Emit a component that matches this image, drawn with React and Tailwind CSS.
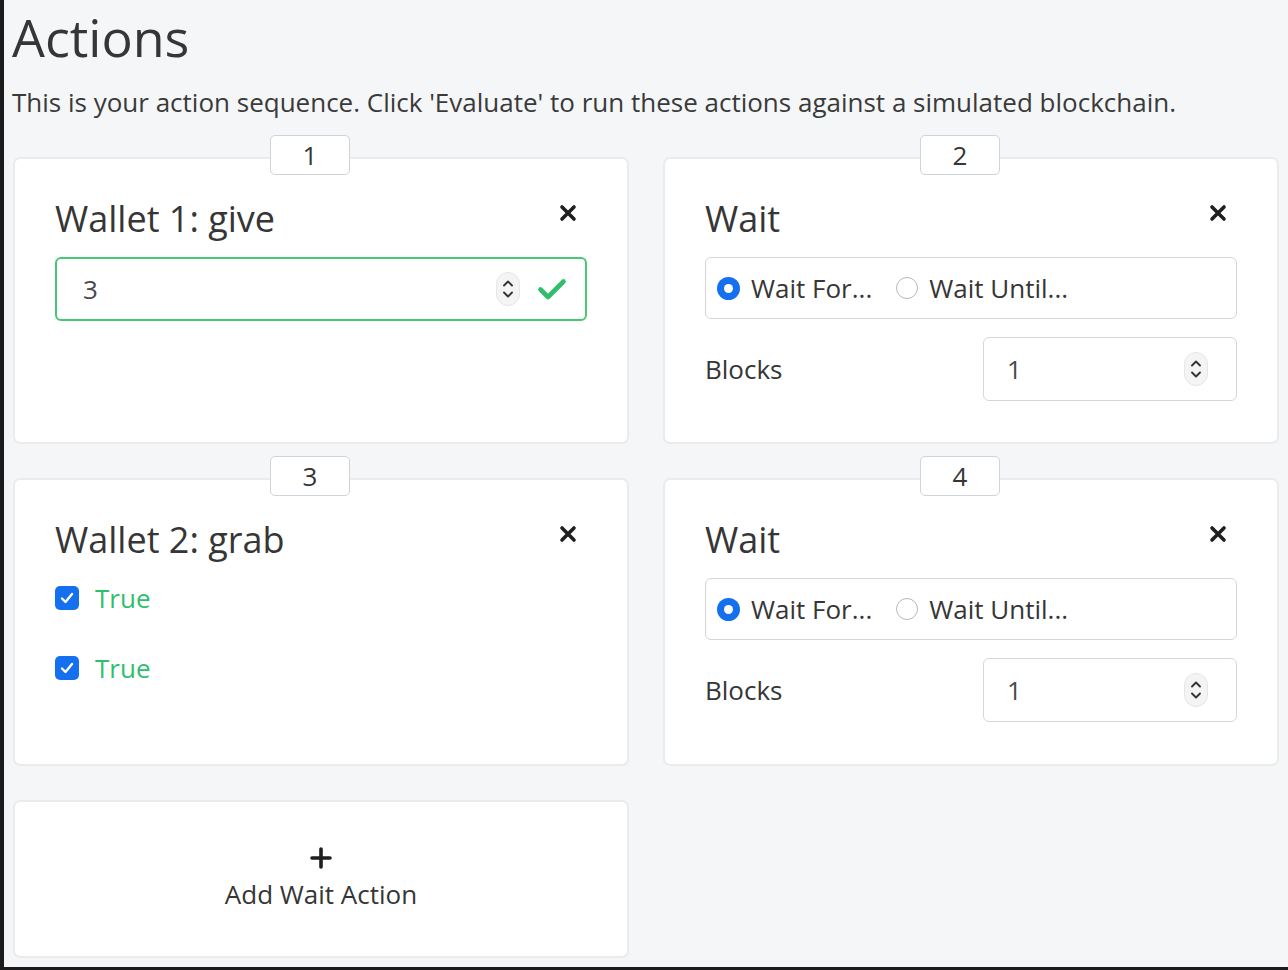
import React from 'react'

const FONT = { fontFamily: '"Open Sans", "Liberation Sans", sans-serif' }

function CloseIcon() {
  return (
    <svg width="20" height="20" viewBox="0 0 20 20" className="block">
      <path d="M4 4 L16 16 M16 4 L4 16" stroke="#1f1f1f" strokeWidth="3.6" strokeLinecap="round" />
    </svg>
  )
}

function Spinner() {
  return (
    <div className="w-[24px] h-[34px] shrink-0 rounded-full bg-[#f4f4f4] border border-[#e6e6e6] flex flex-col items-center justify-center gap-[4px]">
      <svg width="12" height="8" viewBox="0 0 12 8">
        <path d="M2 6.5 L6 2.5 L10 6.5" fill="none" stroke="#333" strokeWidth="1.9" strokeLinecap="round" strokeLinejoin="round" />
      </svg>
      <svg width="12" height="8" viewBox="0 0 12 8">
        <path d="M2 1.5 L6 5.5 L10 1.5" fill="none" stroke="#333" strokeWidth="1.9" strokeLinecap="round" strokeLinejoin="round" />
      </svg>
    </div>
  )
}

function Badge({ n }) {
  return (
    <div className="absolute top-0 left-[257px] w-[80px] h-[40px] rounded-[5px] border border-[#cfd4da] bg-white flex items-center justify-center text-[26px] text-[#363636] leading-none">
      {n}
    </div>
  )
}

function Card({ children, className = '' }) {
  return (
    <div className={`rounded-[7px] border-2 border-[#eaebec] bg-white ${className}`}>
      {children}
    </div>
  )
}

function Header({ title }) {
  return (
    <div className="flex items-start justify-between">
      <h3 className="text-[36px] leading-[1.2] text-[#363636]">{title}</h3>
      <div className="mt-[6px] mr-[9px]">
        <CloseIcon />
      </div>
    </div>
  )
}

function NumberBox({ value, className = '', valid }) {
  return (
    <div
      className={`h-[64px] rounded-[6px] bg-white flex items-center ${
        valid ? 'border-2 border-[#48c774] pl-[26px] pr-[18px]' : 'border border-[#d3d6da] pl-[23px] pr-[28px]'
      } ${className}`}
    >
      <span className="flex-1 text-[26px] text-[#4a4a4a]">{value}</span>
      <Spinner />
      {valid && (
        <svg width="30" height="24" viewBox="0 0 30 24" className="ml-[17px] shrink-0">
          <path d="M3.5 12.5 L11 20 L26.5 4.5" fill="none" stroke="#2fbf6c" strokeWidth="4.6" strokeLinecap="round" strokeLinejoin="round" />
        </svg>
      )}
    </div>
  )
}

function Radio({ on }) {
  if (on) {
    return (
      <span className="block shrink-0 w-[23px] h-[23px] rounded-full bg-[#1570ef] flex items-center justify-center">
        <span className="block w-[9px] h-[9px] rounded-full bg-white" />
      </span>
    )
  }
  return <span className="block shrink-0 w-[22px] h-[22px] rounded-full bg-white border border-[#b9b9b9]" />
}

function Checkbox() {
  return (
    <span className="shrink-0 w-[24px] h-[24px] rounded-[5px] bg-[#1570ef] flex items-center justify-center">
      <svg width="16" height="14" viewBox="0 0 16 14">
        <path d="M3 7.5 L6.5 11 L13 3" fill="none" stroke="#fff" strokeWidth="2.4" strokeLinecap="round" strokeLinejoin="round" />
      </svg>
    </span>
  )
}

function WaitCard() {
  return (
    <Card className="h-full px-[40px] pt-[38px] pb-[41px]">
      <Header title="Wait" />
      <div className="mt-[17px] h-[62px] rounded-[6px] border border-[#d3d6da] flex items-center pl-[11px] text-[26px] text-[#363636]">
        <Radio on />
        <span className="ml-[11px]">Wait For...</span>
        <span className="ml-[24px]">
          <Radio />
        </span>
        <span className="ml-[11px]">Wait Until...</span>
      </div>
      <div className="mt-[18px] flex items-center justify-between">
        <span className="text-[26px] text-[#363636]">Blocks</span>
        <NumberBox value="1" className="w-[254px]" />
      </div>
    </Card>
  )
}

function Item({ n, children }) {
  return (
    <div className="relative pt-[22px]">
      {n && <Badge n={n} />}
      {children}
    </div>
  )
}

export default function App() {
  return (
    <div style={FONT} className="h-[970px] bg-[#f5f6f8] border-l-4 border-b-[3px] border-[#1c1c1c] px-[9px] overflow-hidden">
      <h1 className="-ml-[1px] pt-[6px] text-[52px] leading-[1.2] text-[#363636]">Actions</h1>
      <p className="-ml-[1px] mt-[16px] text-[26px] leading-[1.45] text-[#3a3a3a] whitespace-nowrap">
        This is your action sequence. Click 'Evaluate' to run these actions against a simulated blockchain.
      </p>
      <div className="mt-[13px] grid grid-cols-2 gap-x-[34px] gap-y-[12px]">
        <Item n="1">
          <Card className="h-full px-[40px] pt-[38px] pb-[41px]">
            <Header title="Wallet 1: give" />
            <NumberBox value="3" valid className="mt-[17px]" />
          </Card>
        </Item>
        <Item n="2">
          <WaitCard />
        </Item>
        <Item n="3">
          <Card className="h-full px-[40px] pt-[38px] pb-[77px]">
            <Header title="Wallet 2: grab" />
            <div className="mt-[18px] flex flex-col gap-[32px]">
              {['True', 'True'].map((t, i) => (
                <label key={i} className="flex items-center h-[38px]">
                  <Checkbox />
                  <span className="ml-[16px] text-[26px] text-[#2fbf6c]">{t}</span>
                </label>
              ))}
            </div>
          </Card>
        </Item>
        <Item n="4">
          <WaitCard />
        </Item>
        <Item>
          <Card className="h-[158px] flex flex-col items-center justify-center">
            <svg width="22" height="22" viewBox="0 0 22 22" className="mt-[2px]">
              <path d="M11 2 L11 20 M2 11 L20 11" stroke="#1f1f1f" strokeWidth="3.6" strokeLinecap="round" />
            </svg>
            <span className="mt-[6px] text-[26px] leading-[1.5] text-[#363636]">Add Wait Action</span>
          </Card>
        </Item>
      </div>
    </div>
  )
}
